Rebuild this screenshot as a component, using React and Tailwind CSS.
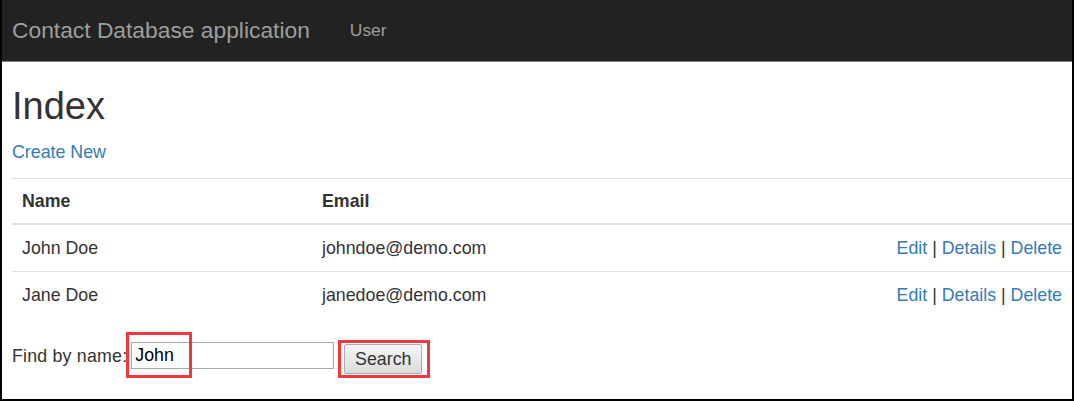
import { useState } from 'react';

const contacts = [
  { id: 1, name: 'John Doe', email: 'johndoe@demo.com' },
  { id: 2, name: 'Jane Doe', email: 'janedoe@demo.com' }
];

function RowActions() {
  return (
    <span className="text-[#333]">
      <a href="#" className="text-[#337ab7]">Edit</a> | <a href="#" className="text-[#337ab7]">Details</a> |{' '}
      <a href="#" className="text-[#337ab7]">Delete</a>
    </span>
  );
}

export default function App() {
  const [query, setQuery] = useState('John');

  return (
    <div className="relative w-[1074px] h-[401px] overflow-hidden bg-white border-x-2 border-b-2 border-black font-['Liberation_Sans',Arial,sans-serif] text-[#333]">
      <nav className="h-[62px] bg-[#222] border-b border-[#7d7d7d] flex items-center pl-[10px]">
        <span className="text-[22.8px] text-[#9d9d9d] leading-none">Contact Database application</span>
        <span className="ml-[40px] text-[17.4px] text-[#9d9d9d] leading-none">User</span>
      </nav>

      <div className="pl-[10px]">
        <h2 className="mt-[23px] text-[38px] leading-[42px] text-[#333]">Index</h2>
        <p className="mt-[13px] text-[17.8px] leading-[25px]">
          <a href="#" className="text-[#337ab7]">Create New</a>
        </p>

        <div className="mt-[13px] text-[17.8px]">
          <div className="flex items-center h-[47px] border-t border-b-2 border-[#ddd] font-bold">
            <div className="w-[300px] pl-[10px]">Name</div>
            <div className="flex-1 pl-[10px]">Email</div>
          </div>
          {contacts.map((c, i) => (
            <div key={c.id} className={`flex items-center ${i === 0 ? 'h-[46px]' : 'h-[47px] border-t border-[#ddd]'}`}>
              <div className="w-[300px] pl-[10px]">{c.name}</div>
              <div className="flex-1 pl-[10px]">{c.email}</div>
              <div className="pr-[10px]">
                <RowActions />
              </div>
            </div>
          ))}
        </div>

        <form className="mt-[24px] flex items-start text-[17.8px]" onSubmit={(e) => e.preventDefault()}>
          <label htmlFor="q" className="mt-[2px] leading-[25px] tracking-[0.2px]">Find by name:</label>
          <input
            id="q"
            value={query}
            onChange={(e) => setQuery(e.target.value)}
            className="ml-[4px] w-[203px] h-[27px] border border-[#a9a9a9] px-[3px] text-black text-[17.8px] outline-none"
          />
          <button
            type="submit"
            className="ml-[10px] mt-[2px] w-[78px] h-[30px] border border-[#adadad] rounded-[2px] bg-gradient-to-b from-[#f6f6f6] to-[#dcdcdc] text-[17.8px] text-[#333]"
          >
            Search
          </button>
        </form>
      </div>

      <div className="absolute left-[124px] top-[332px] w-[66px] h-[46px] border-[3px] border-[#f0383d] pointer-events-none" />
      <div className="absolute left-[336px] top-[340px] w-[92px] h-[38px] border-[3px] border-[#f0383d] pointer-events-none" />
    </div>
  );
}
